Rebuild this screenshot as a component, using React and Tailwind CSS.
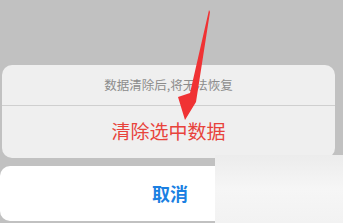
export default function App() {
  return (
    <div className="relative w-[343px] h-[223px] overflow-hidden bg-[#c1c1c1]" style={{ fontFamily: '"Noto Sans CJK SC", "Noto Sans", sans-serif' }}>
      <div className="pt-[65px] pl-[2px] pr-[8px]">
        <div className="rounded-[10px] bg-[#efefef] h-[93px] flex flex-col">
          <div className="h-[41px] flex items-center justify-center text-[12.5px] text-[#8c8c8c] border-b border-[#cfcfcf]">数据清除后,将无法恢复</div>
          <div className="flex-1 flex items-center justify-center pb-[2px] text-[19px] text-[#e8433b]">清除选中数据</div>
        </div>
      </div>
      <div className="mt-[8px] pr-[3px]">
        <div className="rounded-[10px] bg-white h-[55px] flex items-center justify-center">
          <span className="text-[18px] font-bold text-[#1a80e2]">取消</span>
        </div>
      </div>
      <div className="absolute left-[215px] top-[155px] w-[128px] h-[68px] bg-gradient-to-b from-[#ececec] via-[#f6f6f6] to-[#f2f2f2]" />
      <svg className="absolute left-0 top-0" width="343" height="223" viewBox="0 0 343 223">
        <polygon points="209,10 210,12 196,102 185,120 178,97 190,93" fill="#f03234" />
      </svg>
    </div>
  );
}
